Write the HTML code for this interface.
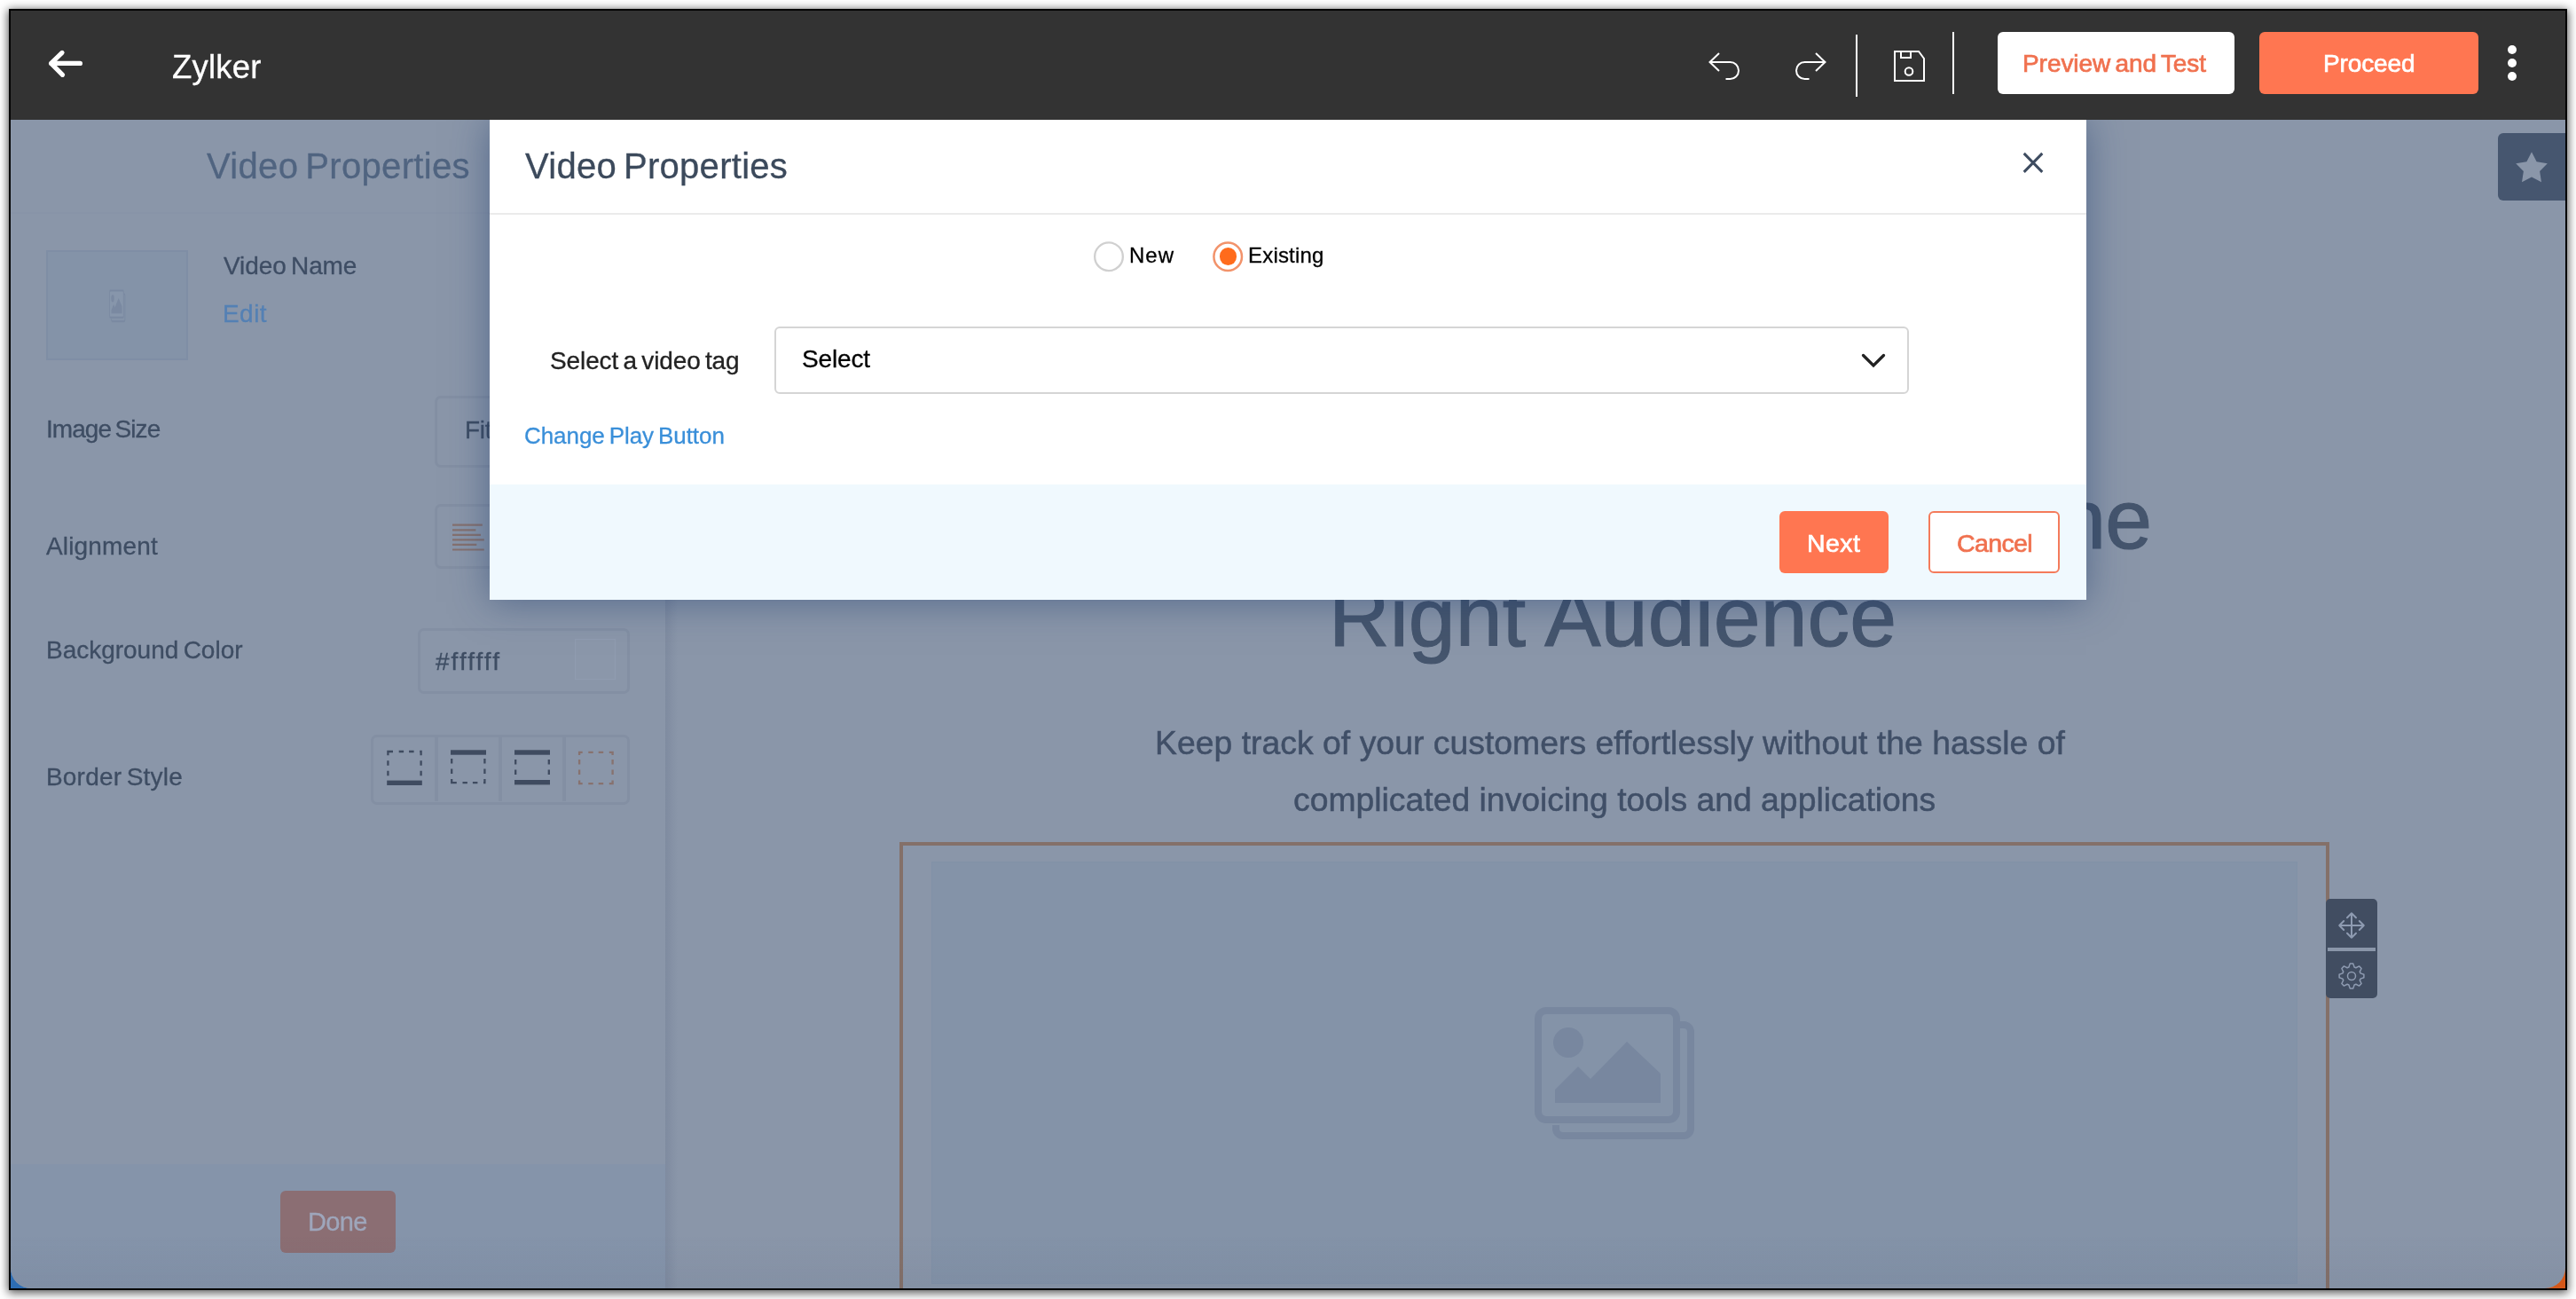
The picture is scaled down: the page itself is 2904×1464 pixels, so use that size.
<!DOCTYPE html>
<html lang="en">
<head>
<meta charset="utf-8">
<title>Video Properties</title>
<style>
html,body{margin:0;padding:0;}
html{width:2904px;height:1464px;overflow:hidden;}
body{width:2904px;height:1464px;overflow:hidden;background:#fff;position:relative;font-family:"Liberation Sans",sans-serif;}
.abs{position:absolute;}
#frame{position:absolute;left:10px;top:10px;width:2880px;height:1440px;border:2px solid #000;box-shadow:0 2px 10px 1px rgba(0,0,0,.68);background:linear-gradient(90deg,#2d6db3 0,#2d6db3 50%,#d4581a 50%,#d4581a 100%);}
#win{position:absolute;left:0;top:0;width:2904px;height:1464px;overflow:hidden;clip-path:inset(12px 12px 12px 12px round 0 0 23px 23px);}
.t{position:absolute;will-change:transform;-webkit-text-stroke:0.3px currentColor;white-space:nowrap;line-height:1;font-family:"Liberation Sans",sans-serif;}
svg{position:absolute;overflow:visible;}
/* dimmed page */
#panel{left:12px;top:135px;width:738px;height:1317px;background:#8a96a9;}
#panelline{left:12px;top:239px;width:738px;height:2px;background:#8894a8;}
#panelfoot{left:12px;top:1312px;width:738px;height:140px;background:#8594aa;}
#canvas{left:750px;top:135px;width:2142px;height:1317px;background:#8a96a9;}
#canvasshade{left:750px;top:135px;width:14px;height:1317px;background:linear-gradient(90deg,rgba(60,75,105,.14),rgba(60,75,105,0));}
#botshade{left:12px;top:1392px;width:2880px;height:60px;background:linear-gradient(180deg,rgba(60,75,105,0),rgba(60,75,105,.07));}
#thumb{left:52px;top:282px;width:156px;height:120px;border:2px solid #7f8ea5;background:#8493a8;}
.ibox{border:3px solid #838fa3;border-radius:7px;background:transparent;box-sizing:border-box;}
#fitbox{left:490.4px;top:446.3px;width:220px;height:80.7px;}
#alignbox{left:490.4px;top:568.4px;width:220px;height:72.4px;}
#colorbox{left:470.5px;top:708px;width:239px;height:73.5px;}
#swatch{left:648px;top:720px;width:44px;height:44px;border:1px solid #909cb0;background:#8b97aa;}
#bsbox{left:418.2px;top:828.2px;width:291.7px;height:78.4px;border-width:3.6px;}
.bsdiv{top:831px;width:3.5px;height:72px;background:#838fa3;}
#done{left:316px;top:1342px;width:130px;height:70px;border-radius:6px;background:#8b6e73;}
#selblock{left:1014px;top:949px;width:1604px;height:503px;border:4px solid #847069;}
#imgarea{left:1050px;top:971px;width:1540px;height:476px;background:#8493a8;box-shadow:inset 0 0 0 1px #8191a7;}
#tools{left:2622px;top:1013px;width:58px;height:112px;border-radius:5px;background:#414d61;}
#toolsdiv{left:2624px;top:1068px;width:54px;height:4px;background:#8a96a9;}
#starbox{left:2816px;top:150px;width:78px;height:76px;border-radius:6px 0 0 6px;background:#46566f;}
/* header */
#header{left:12px;top:12px;width:2880px;height:123px;background:#333;}
.hsep{width:2px;background:#fff;}
#previewbtn{left:2252px;top:36px;width:267px;height:70px;border-radius:6px;background:#fff;}
#proceedbtn{left:2547px;top:36px;width:247px;height:70px;border-radius:6px;background:#ff7651;}
.dot{width:10px;height:10px;border-radius:50%;background:#fff;left:2827px;}
/* modal */
#modal{left:552px;top:135px;width:1800px;height:541px;background:#fff;box-shadow:0 2px 40px rgba(30,60,110,.5);}
#mline{left:552px;top:240px;width:1800px;height:2px;background:#ebebeb;}
#mfoot{left:552px;top:546px;width:1800px;height:130px;background:#f0f9fe;}
#radio2dot{left:1374.7px;top:279.4px;width:19.2px;height:19.2px;border-radius:50%;background:#ff6b1c;}
#selectbox{left:873px;top:368px;width:1275px;height:72px;border:2px solid #d5d5d5;border-radius:6px;background:#fff;}
#nextbtn{left:2006px;top:576px;width:123px;height:70px;border-radius:6px;background:#ff7651;}
#cancelbtn{left:2174px;top:576px;width:144px;height:66px;border:2px solid #f47b5b;border-radius:6px;background:#fff;}
</style>
</head>
<body>
<div id="frame"></div>
<div id="win">
<div class="abs" id="panel"></div>
<div class="abs" id="panelline"></div>
<div class="abs" id="panelfoot"></div>
<div class="abs" id="canvas"></div>
<div class="abs" id="canvasshade"></div>
<span class="t" style="left:232.70px;top:166.64px;font-size:40px;letter-spacing:0.330px;color:#506480;word-spacing:-3.40px;">Video Properties</span>
<div class="abs" id="thumb"></div>
<svg style="left:122.5px;top:326px" width="18.5" height="37" viewBox="1728 1133 184 150" preserveAspectRatio="none"><g fill="none" stroke="#7a89a1" stroke-width="8"><path d="M1754 1268v4a8 8 0 0 0 8 8h136a8 8 0 0 0 8-8v-109a8 8 0 0 0-8-8h-4"/><rect x="1734" y="1139" width="156" height="123" rx="9" fill="#8796ab"/></g><circle cx="1768" cy="1175" r="17" fill="#7a89a1"/><path d="M1753 1228l26-26 14 14 41-42 38 36v33h-119z" fill="#7a89a1"/></svg>
<span class="t" style="left:252.20px;top:286.05px;font-size:28px;letter-spacing:-0.085px;color:#3e4d64;word-spacing:-2.38px;">Video Name</span>
<span class="t" style="left:251.21px;top:339.90px;font-size:28px;letter-spacing:0.448px;color:#5480b4;">Edit</span>
<span class="t" style="left:52.41px;top:470.00px;font-size:28px;letter-spacing:-0.941px;color:#3e4d63;word-spacing:-2.38px;">Image Size</span>
<div class="abs ibox" id="fitbox"></div>
<span class="t" style="left:523.61px;top:470.80px;font-size:28px;letter-spacing:-0.300px;color:#3e4d63;word-spacing:-2.38px;">Fit to Width</span>
<span class="t" style="left:52.10px;top:602.00px;font-size:28px;letter-spacing:0.162px;color:#3e4d63;">Alignment</span>
<div class="abs ibox" id="alignbox"></div>
<svg style="left:509px;top:589px" width="38" height="34" viewBox="0 0 38 34"><g stroke="#85716f" stroke-width="2.2" fill="none"><path d="M1 2.7H34.8M1 8.3H27.4M1 13.8H33M1 19.3H36.8M1 24.8H28.3M1 30.5H36.8"/></g></svg>
<span class="t" style="left:51.71px;top:718.90px;font-size:28px;letter-spacing:-0.015px;color:#3e4d63;word-spacing:-2.38px;">Background Color</span>
<div class="abs ibox" id="colorbox"></div>
<div class="abs" id="swatch"></div>
<span class="t" style="left:490.80px;top:731.70px;font-size:28px;letter-spacing:2.031px;color:#3e4d63;">#ffffff</span>
<span class="t" style="left:51.71px;top:862.00px;font-size:28px;letter-spacing:0.185px;color:#3e4d63;word-spacing:-2.38px;">Border Style</span>
<div class="abs ibox" id="bsbox"></div>
<div class="abs bsdiv" style="left:490.2px"></div>
<div class="abs bsdiv" style="left:562.3px"></div>
<div class="abs bsdiv" style="left:634.2px"></div>
<svg style="left:430px;top:840px" width="270" height="52" viewBox="430 840 270 52"><g fill="none" stroke="#3f4b60" stroke-width="2.3"><path d="M437.4 879V847H474.6V879" stroke-dasharray="0 4.8 5.5 6 5.4 6 9.9 6.7 5.4 6 5.5 6.6 5.7 6 5.4 6 5.5 4.8"/><path d="M509.2 850.2V882.2H546.4V850.2" stroke-dasharray="0 4.8 5.5 6 5.4 6 9.9 6.7 5.4 6 5.5 6.6 5.7 6 5.4 6 5.5 4.8"/><path d="M581.2 851V879M618.8 851V879" stroke-dasharray="0 5 5.5 6 5.5 6"/><path d="M653.1 847.9H690.6V883.2H653.1Z" stroke="#87726f" stroke-dasharray="3.6 6.6 5.4 6 5.5 6.6 6.8 5 5.5 6 5.5 6.6 7.5 6.6 5.5 6 5.4 6.6 7.3 6.6 5.5 6 5.5 5 3 0"/></g><g fill="#3f4b60"><rect x="436.2" y="879.6" width="39.6" height="5.4"/><rect x="508" y="845.3" width="40" height="5.4"/><rect x="580" y="845.3" width="40" height="5.4"/><rect x="580" y="879" width="40" height="5.4"/></g></svg>
<div class="abs" id="done"></div>
<span class="t" style="left:347.43px;top:1363.45px;font-size:29px;letter-spacing:-0.629px;color:#9ea6bb;">Done</span>
<span class="t" style="left:1361.41px;top:538.38px;font-size:95px;letter-spacing:-0.800px;color:#45556d;-webkit-text-stroke:1.1px currentColor;">Get Your Message Online</span>
<span class="t" style="left:1497.58px;top:647.88px;font-size:95px;letter-spacing:0.074px;color:#45556d;-webkit-text-stroke:1.1px currentColor;">Right Audience</span>
<span class="t" style="left:1301.69px;top:818.63px;font-size:37.3px;letter-spacing:0.039px;color:#404f67;-webkit-text-stroke:0.5px currentColor;">Keep track of your customers effortlessly without the hassle of</span>
<span class="t" style="left:1457.83px;top:882.73px;font-size:37.3px;letter-spacing:0.016px;color:#404f67;-webkit-text-stroke:0.5px currentColor;">complicated invoicing tools and applications</span>
<div class="abs" id="selblock"></div>
<div class="abs" id="imgarea"></div>
<svg style="left:1728px;top:1133px" width="184" height="150" viewBox="1728 1133 184 150"><g fill="none" stroke="#78879f" stroke-width="8"><path d="M1754 1268v4a8 8 0 0 0 8 8h136a8 8 0 0 0 8-8v-109a8 8 0 0 0-8-8h-4"/><rect x="1734" y="1139" width="156" height="123" rx="9" fill="#8493a8"/></g><circle cx="1768" cy="1175" r="17" fill="#78879f"/><path d="M1753 1228l26-26 14 14 41-42 38 36v33h-119z" fill="#78879f"/></svg>
<div class="abs" id="tools"></div>
<div class="abs" id="toolsdiv"></div>
<svg style="left:2634px;top:1025.9px" width="34" height="34" viewBox="-17 -17 34 34"><g fill="none" stroke="#8e9bb1" stroke-width="2" stroke-linecap="round" stroke-linejoin="round"><path d="M-13.8 0H13.8M0 -13.8V13.8M-8.8 -5L-13.8 0L-8.8 5M8.8 -5L13.8 0L8.8 5M-5 -8.8L0 -13.8L5 -8.8M-5 8.8L0 13.8L5 8.8"/></g></svg>
<svg style="left:2633.9px;top:1082.8px" width="34" height="34" viewBox="-17 -17 34 34"><g fill="none" stroke="#8e9bb1" stroke-width="1.5" stroke-linejoin="round"><circle r="4.5"/><path d="M-3.10 -10.03L-1.81 -13.88L1.81 -13.88L3.10 -10.03L4.90 -9.29L8.53 -11.10L11.10 -8.53L9.29 -4.90L10.03 -3.10L13.88 -1.81L13.88 1.81L10.03 3.10L9.29 4.90L11.10 8.53L8.53 11.10L4.90 9.29L3.10 10.03L1.81 13.88L-1.81 13.88L-3.10 10.03L-4.90 9.29L-8.53 11.10L-11.10 8.53L-9.29 4.90L-10.03 3.10L-13.88 1.81L-13.88 -1.81L-10.03 -3.10L-9.29 -4.90L-11.10 -8.53L-8.53 -11.10L-4.90 -9.29Z"/></g></svg>
<div class="abs" id="starbox"></div>
<svg style="left:2833.7px;top:170.3px" width="40" height="40" viewBox="-20 -20 40 40"><path d="M0.00 -18.70L5.64 -7.77L17.78 -5.78L9.13 2.97L10.99 15.13L0.00 9.60L-10.99 15.13L-9.13 2.97L-17.78 -5.78L-5.64 -7.77Z" fill="#8a96a9"/></svg>
<div class="abs" id="botshade"></div>

<div class="abs" id="modal"></div>
<div class="abs" id="mline"></div>
<div class="abs" id="mfoot"></div>
<span class="t" style="left:592.00px;top:167.14px;font-size:40px;letter-spacing:0.283px;color:#3c4a5c;word-spacing:-3.40px;">Video Properties</span>
<svg style="left:2276px;top:168px" width="32" height="32" viewBox="2276 168 32 32"><path d="M2281.7 172.9L2302.3 193.9M2302.3 172.9L2281.7 193.9" fill="none" stroke="#3e4c60" stroke-width="3"/></svg>
<svg style="left:1230px;top:269px" width="40" height="40" viewBox="1230 269 40 40"><circle cx="1250" cy="289.2" r="15.85" fill="#fff" stroke="#d0d0d0" stroke-width="2.3"/></svg>
<span class="t" style="left:1272.60px;top:275.68px;font-size:24px;letter-spacing:1.010px;color:#000;">New</span>
<svg style="left:1364px;top:269px" width="40" height="40" viewBox="1364 269 40 40"><circle cx="1384.2" cy="289.2" r="15.8" fill="#fff" stroke="#f2936b" stroke-width="2.5"/></svg>
<div class="abs" id="radio2dot"></div>
<span class="t" style="left:1407.10px;top:275.68px;font-size:24px;letter-spacing:0.188px;color:#000;">Existing</span>
<span class="t" style="left:619.62px;top:392.90px;font-size:28px;letter-spacing:-0.106px;color:#222;word-spacing:-2.38px;">Select a video tag</span>
<div class="abs" id="selectbox"></div>
<span class="t" style="left:903.83px;top:390.90px;font-size:28px;letter-spacing:-0.148px;color:#000;">Select</span>
<svg style="left:2094px;top:394px" width="36" height="26" viewBox="2094 394 36 26"><path d="M2100.5 400.5L2112 412L2123.5 400.5" fill="none" stroke="#222" stroke-width="3.3" stroke-linecap="round" stroke-linejoin="miter"/></svg>
<span class="t" style="left:591.38px;top:477.59px;font-size:26px;letter-spacing:-0.057px;color:#3a8fd9;word-spacing:-2.21px;">Change Play Button</span>
<div class="abs" id="nextbtn"></div>
<span class="t" style="left:2036.77px;top:597.87px;font-size:28.5px;letter-spacing:0.443px;color:#fff;-webkit-text-stroke:0.7px currentColor;">Next</span>
<div class="abs" id="cancelbtn"></div>
<span class="t" style="left:2205.66px;top:597.87px;font-size:28.5px;letter-spacing:-0.620px;color:#f0714f;-webkit-text-stroke:0.7px currentColor;">Cancel</span>

<div class="abs" id="header"></div>
<svg style="left:52px;top:52px" width="46" height="40" viewBox="52 52 46 40"><g fill="none" stroke="#fff" stroke-width="5.2" stroke-linecap="round" stroke-linejoin="round"><path d="M57.6 71.4H90.4M70 59.4L57.6 71.4L70.5 84.3"/></g></svg>
<span class="t" style="left:193.86px;top:58.40px;font-size:36.5px;letter-spacing:0.192px;color:#fff;">Zylker</span>
<svg style="left:1920px;top:52px" width="150" height="44" viewBox="1920 52 150 44"><g fill="none" stroke="#fff" stroke-width="2" stroke-linejoin="miter"><path d="M1938 60L1927.5 70L1938 80M1928 70H1950.5A9.5 9.5 0 0 1 1950.5 89H1945.5"/><path d="M2047 60L2057.500 70L2047 80M2057 70H2034.500A9.500 9.500 0 0 0 2034.500 89H2039.500"/></g></svg>
<div class="abs hsep" style="left:2092px;top:39px;height:70px"></div>
<svg style="left:2130px;top:52px" width="46" height="46" viewBox="2130 52 46 46"><g fill="none" stroke="#fff" stroke-width="2" stroke-linejoin="miter"><path d="M2136 58H2163L2169 66V91H2136Z"/><path d="M2143 58V65H2154V58"/><circle cx="2152" cy="80.500" r="4.300"/></g></svg>
<div class="abs hsep" style="left:2201px;top:36px;height:70px"></div>
<div class="abs" id="previewbtn"></div>
<span class="t" style="left:2280.31px;top:58.30px;font-size:28px;letter-spacing:-0.057px;color:#f0714f;-webkit-text-stroke:0.7px currentColor;word-spacing:-2.38px;">Preview and Test</span>
<div class="abs" id="proceedbtn"></div>
<span class="t" style="left:2618.81px;top:58.30px;font-size:28px;letter-spacing:-0.138px;color:#fff;-webkit-text-stroke:0.7px currentColor;">Proceed</span>
<div class="abs dot" style="top:51px"></div>
<div class="abs dot" style="top:66px"></div>
<div class="abs dot" style="top:81px"></div>

</div>
</body>
</html>
